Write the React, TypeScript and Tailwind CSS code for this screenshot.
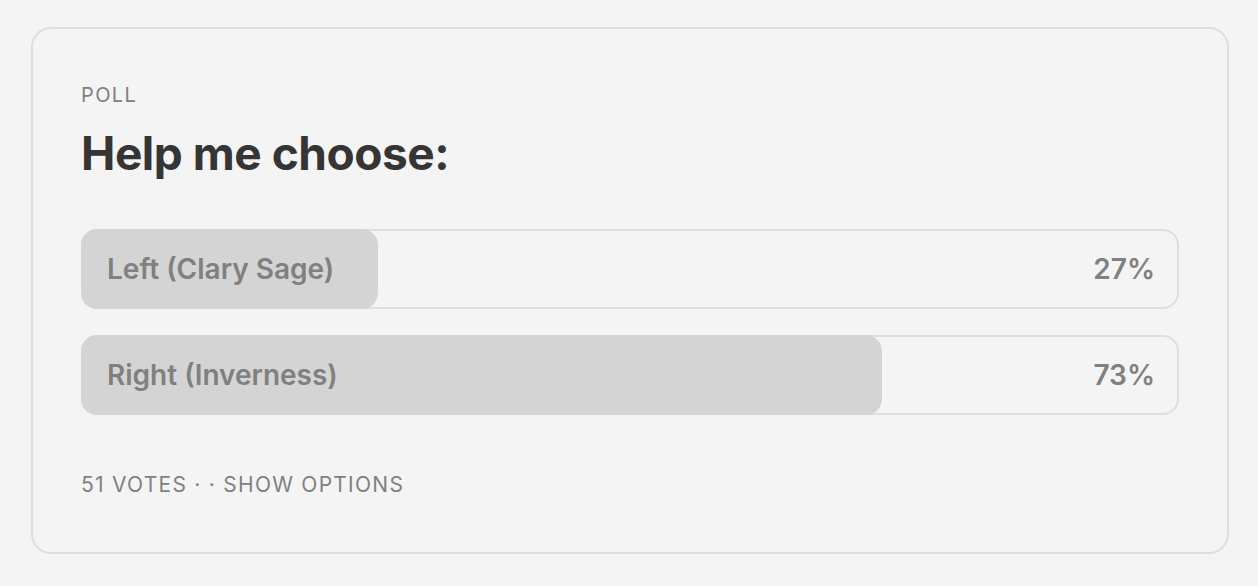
import React from "react";

type Option = { label: string; pct: number };

const options: Option[] = [
  { label: "Left (Clary Sage)", pct: 27 },
  { label: "Right (Inverness)", pct: 73 },
];

function PollBar({ option }: { option: Option }) {
  return (
    <div className="relative h-[80px] rounded-[16px] border-2 border-[#dedede]">
      <div
        className="absolute left-[-2px] top-[-2px] bottom-[-2px] rounded-[16px] bg-[#d4d4d4]"
        style={{ width: `calc(${option.pct}% + 2px)` }}
      />
      <div className="relative flex h-full items-center justify-between pl-[24px] pr-[22px] text-[28px] font-semibold text-[#808080]">
        <span>{option.label}</span>
        <span>{option.pct}%</span>
      </div>
    </div>
  );
}

export default function App() {
  return (
    <div
      className="min-h-[586px] bg-[#f4f4f4] pl-[31px] pr-[29px] pt-[27px] pb-[33px]"
      style={{ fontFamily: "Inter, 'Noto Sans', sans-serif" }}
    >
      <div className="rounded-[20px] border-2 border-[#dedede] px-[48px] pt-[54px] pb-[55px]">
        <div className="text-[20px] leading-[24px] tracking-[0.07em] text-[#808080]">
          POLL
        </div>
        <h1 className="mt-[19px] text-[46px] leading-[54px] font-bold tracking-[-0.01em] text-[#353535]">
          Help me choose:
        </h1>
        <div className="mt-[49px] flex flex-col gap-[26px]">
          {options.map((o) => (
            <PollBar key={o.label} option={o} />
          ))}
        </div>
        <div className="mt-[57px] text-[21px] leading-[25px] tracking-[0.06em] text-[#808080]">
          51 VOTES · · SHOW OPTIONS
        </div>
      </div>
    </div>
  );
}
